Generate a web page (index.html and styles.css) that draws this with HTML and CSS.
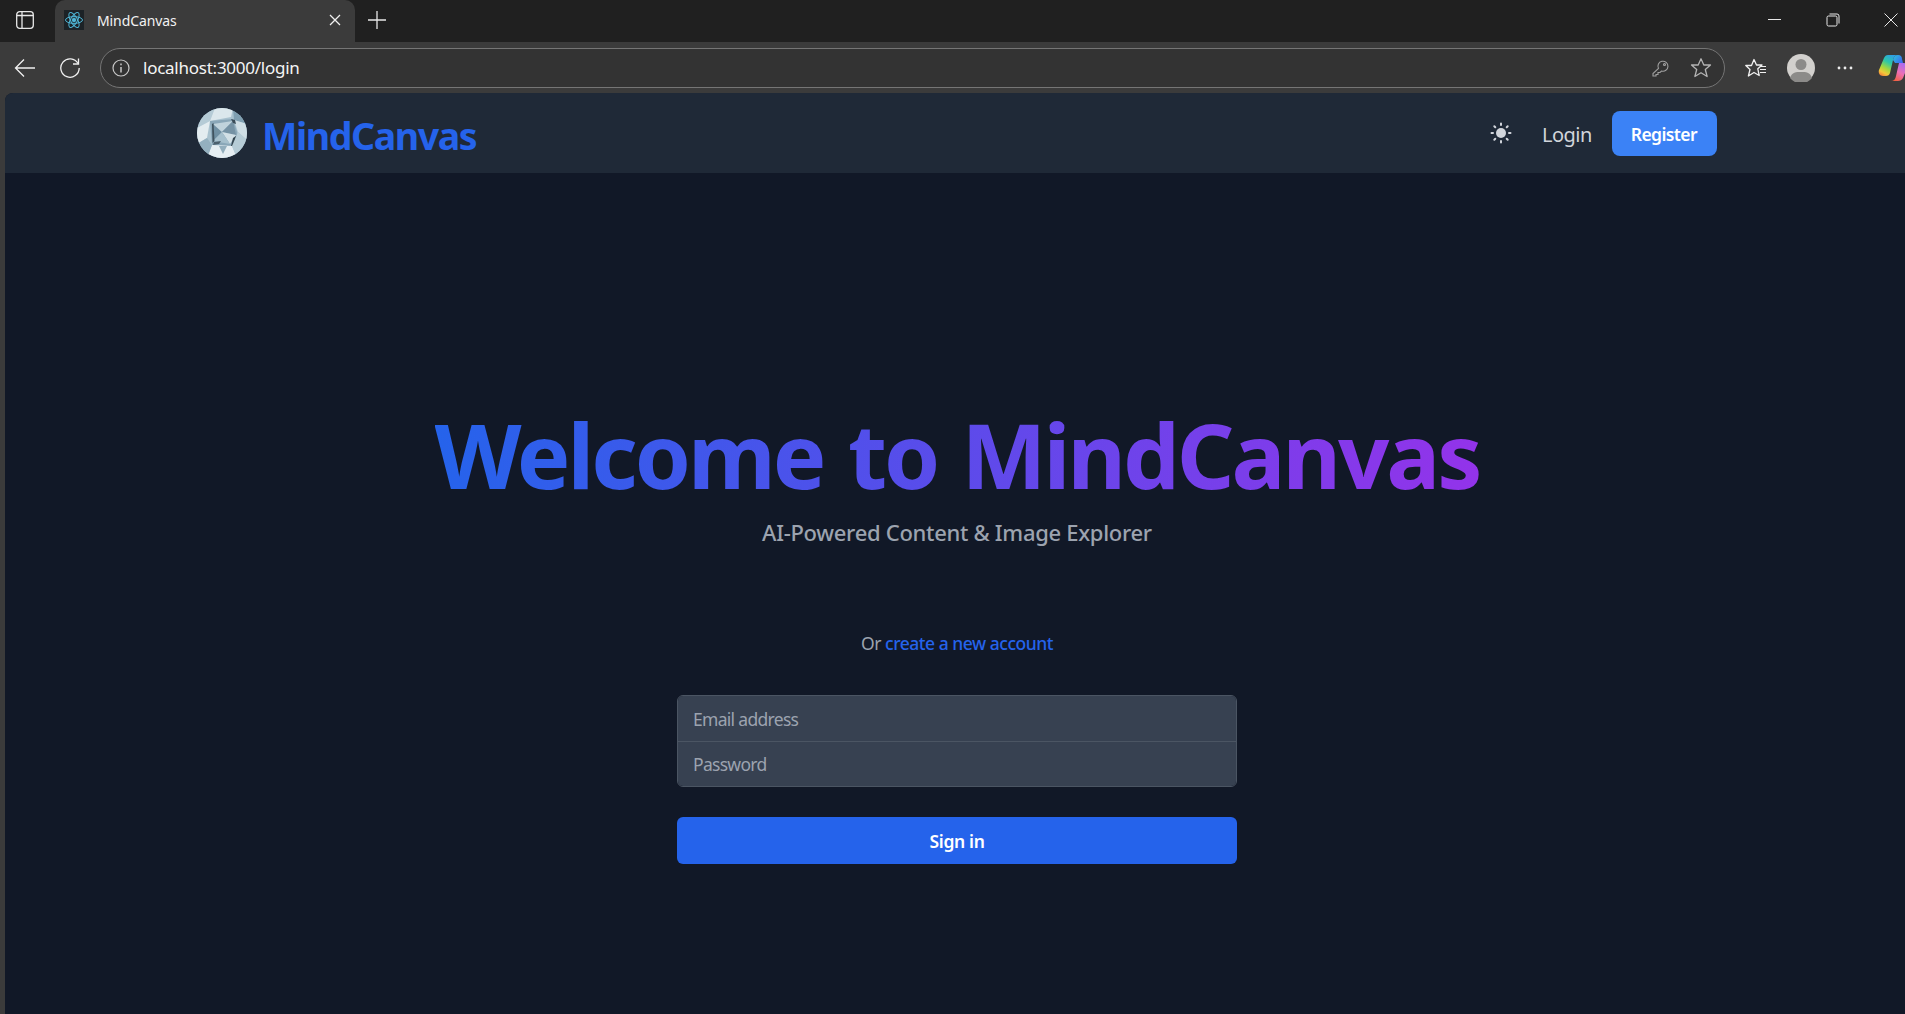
FILE: index.html
```html
<!DOCTYPE html>
<html>

	<head>
		<meta charset="UTF-8">
		<title>MindCanvas</title>
		<link rel="stylesheet" href="styles.css">
	</head>

	<body>
		<div class="tabstrip">
			<div class="panebtn">
				<svg width="18" height="18" viewBox="0 0 18 18" fill="none" stroke="#e8e8e8" stroke-width="1.3"><rect x="0.7" y="0.7" width="16.600" height="16.600" rx="3"/><path d="M6 1V17M1 4.500H17"/></svg>
			</div>
			<div class="tab">
				<span class="favicon">
					<svg width="20" height="20" viewBox="0 0 20 20" fill="none" stroke="#4fb6d6" stroke-width="1"><circle cx="10" cy="10" r="1.8" fill="#4fb6d6"/><ellipse cx="10" cy="10" rx="8.5" ry="3.4"/><ellipse cx="10" cy="10" rx="8.5" ry="3.4" transform="rotate(60 10 10)"/><ellipse cx="10" cy="10" rx="8.5" ry="3.4" transform="rotate(120 10 10)"/></svg>
				</span>
				<span class="tabtitle">MindCanvas</span>
				<svg class="tabclose" width="12" height="12" viewBox="0 0 12 12" stroke="#f0f0f0" stroke-width="1.3"><path d="M1 1L11 11M11 1L1 11"/></svg>
			</div>
			<svg class="newtab" width="18" height="18" viewBox="0 0 18 18" stroke="#e8e8e8" stroke-width="1.3"><path d="M9 0V18M0 9H18"/></svg>
			<div class="winbtns">
				<svg width="14" height="14" viewBox="0 0 14 14" stroke="#e8e8e8" stroke-width="1"><path d="M0 6.500H13"/></svg>
				<svg width="14" height="14" viewBox="0 0 14 14" fill="none" stroke="#e8e8e8" stroke-width="1"><rect x="1" y="3" width="10" height="10" rx="1.5"/><path d="M3.500 1H11a2 2 0 0 1 2 2v7.500"/></svg>
				<svg width="14" height="14" viewBox="0 0 14 14" stroke="#e8e8e8" stroke-width="1"><path d="M0.500 0.500L13.500 13.500M13.500 0.500L0.500 13.500"/></svg>
			</div>
		</div>
		<div class="toolbar">
			<svg class="backbtn" width="22" height="20" viewBox="0 0 22 20" fill="none" stroke="#f0f0f0" stroke-width="1.3"><path d="M21 10H2M10 1.500L1.500 10L10 18.500"/></svg>
			<svg class="reload" width="22" height="22" viewBox="0 0 22 22" fill="none" stroke="#f0f0f0" stroke-width="1.3"><path d="M19 6.500A9.200 9.200 0 1 0 20.200 11"/><path d="M19.500 1.500V7H14"/></svg>
			<div class="addressbar">
				<svg width="18" height="18" viewBox="0 0 18 18" fill="none" stroke="#c8c8c8" stroke-width="1.2"><circle cx="9" cy="9" r="8"/><path d="M9 8V13.500M9 4.600V6.200" stroke-width="1.5"/></svg>
				<span class="url">localhost:3000/login</span>
				<svg class="key" width="18" height="18" viewBox="0 0 18 18" fill="none" stroke="#a0a0a0" stroke-width="1.1"><path d="M6.500 9.500A5 5 0 1 1 9.500 12L8 13.500H6V15.500H4V17H1V14.500Z"/><circle cx="12.500" cy="5.500" r="1"/></svg>
				<svg class="star" width="22" height="22" viewBox="0 0 22 22" fill="none" stroke="#b4b4b4" stroke-width="1.3"><path d="M11 1.800L13.800 8H20.500L15.300 12.500L17.100 19.500L11 15.800L4.900 19.500L6.700 12.500L1.500 8H8.200Z" stroke-linejoin="round"/></svg>
			</div>
			<svg class="favs" width="22" height="20" viewBox="0 0 22 20" fill="none" stroke="#f0f0f0" stroke-width="1.3"><path d="M9 1.500L11.500 7H17L12.800 10.800L14.200 17.500L9 14.500L3.400 18L5 11.500L0.800 7.500H6.500Z" stroke-linejoin="round"/><path d="M15 8.500H21M15 11.500H21M15 14.500H21" stroke-width="1"/></svg>
			<svg class="avatar" width="28" height="28" viewBox="0 0 28 28"><circle cx="14" cy="14" r="14" fill="#d2d0cd"/><circle cx="14" cy="10.500" r="5.500" fill="#8c8b89"/><path d="M3 24C5 18 9 18 14 18C19 18 23 18 25 24A14 14 0 0 1 3 24Z" fill="#8c8b89"/></svg>
			<svg class="dots" width="16" height="4" viewBox="0 0 16 4" fill="#ececec"><circle cx="2" cy="2" r="1.400"/><circle cx="8" cy="2" r="1.400"/><circle cx="14" cy="2" r="1.400"/></svg>
			<svg class="copilot" width="30" height="28" viewBox="0 0 30 28">
				<defs>
					<linearGradient id="cop1" x1="0.7" y1="0" x2="0.2" y2="1"><stop offset="0" stop-color="#2f9fe8"/><stop offset=".35" stop-color="#2cc7a8"/><stop offset=".65" stop-color="#a6d83c"/><stop offset=".85" stop-color="#f4c83a"/><stop offset="1" stop-color="#f4873a"/></linearGradient>
					<linearGradient id="cop2" x1="0.7" y1="0" x2="0.2" y2="1"><stop offset="0" stop-color="#a76cf2"/><stop offset=".5" stop-color="#ee6fb4"/><stop offset="1" stop-color="#f2603c"/></linearGradient>
					<linearGradient id="cop3" x1="0" y1="0" x2="1" y2="0.6"><stop offset="0" stop-color="#2ec4dc"/><stop offset="1" stop-color="#3a6ef0"/></linearGradient>
				</defs>
				<path d="M10 1H20C17 1 15.500 3 15 6L12 19C11.500 21 10 22 8 22H5C2 22 0 19 1 16L6 4C7 2 8 1 10 1Z" fill="url(#cop1)"/>
				<path d="M20 1C23 1 24 3 24 5L25 9H17L15 6C15.500 3 17 1 20 1Z" fill="url(#cop3)"/>
				<path d="M18 9H25C28 9 30 11 29 14L25 24C24 26 22 27 20 27H13C16 27 17.500 25 18 22L21 9Z" fill="url(#cop2)"/>
			</svg>
		</div>
		<div class="viewport">
			<nav class="navbar">
				<div class="navinner">
					<a class="brand">
						<svg class="logo" width="50" height="50" viewBox="0 0 50 50">
							<defs><clipPath id="logoclip"><circle cx="25" cy="25" r="25"/></clipPath></defs>
							<g clip-path="url(#logoclip)">
								<rect width="50" height="50" fill="#a9c2cf"/>
								<polygon points="0,0 18,0 13,13 0,20" fill="#b5cbd6"/>
								<polygon points="18,0 36,0 34,9 13,13" fill="#dbe7ec"/>
								<polygon points="36,0 50,0 50,16 37,12" fill="#7f9fb1"/>
								<polygon points="0,20 13,13 10,30 0,36" fill="#e3ecf0"/>
								<polygon points="37,12 50,16 50,32 41,24" fill="#cfdee5"/>
								<polygon points="13,13 36,11 41,27 35,38 15,37" fill="#8aa7b8"/>
								<polygon points="16,16 25,24 16,33" fill="#6f8fa2"/>
								<polygon points="16,16 36,13 25,24" fill="#c0d3dc"/>
								<polygon points="36,13 39,27 25,24" fill="#7592a4"/>
								<polygon points="25,24 39,27 33,36" fill="#d2e0e6"/>
								<polygon points="25,24 33,36 16,33" fill="#a5bfcc"/>
								<polygon points="15,16 16.500,15 17.500,33 15.500,35" fill="#3f525e"/>
								<polygon points="17,34 24,33 22,36 16,37" fill="#4c606d"/>
								<polygon points="34,11 38,12 39,16 36,15" fill="#3a4c58"/>
								<polygon points="36,30 39,28 37,38 34,38" fill="#33454f"/>
								<polygon points="15,37 35,38 40,50 10,50" fill="#e6eef2"/>
								<polygon points="22,38 30,38 26,46" fill="#93aebd"/>
								<polygon points="0,36 10,30 15,37 10,50 0,50" fill="#94b0bf"/>
								<polygon points="41,24 50,32 50,50 40,50 35,38" fill="#b6ccd6"/>
							</g>
						</svg>
						<span class="brandname">MindCanvas</span>
					</a>
					<div class="navlinks">
						<svg class="sun" width="22" height="22" viewBox="0 0 22 22" fill="#d1d5db"><circle cx="11" cy="11" r="5"/><g stroke="#d1d5db" stroke-width="2" stroke-linecap="round"><path d="M11 1.500V3M11 19V20.500M1.500 11H3M19 11H20.500M4.300 4.300L5.300 5.300M16.700 16.700L17.700 17.700M4.300 17.700L5.300 16.700M16.700 5.300L17.700 4.300"/></g></svg>
						<a class="loginlink">Login</a>
						<a class="registerbtn">Register</a>
					</div>
				</div>
			</nav>
			<main class="content">
				<h1 class="hero">Welcome to MindCanvas</h1>
				<p class="tagline">AI-Powered Content &amp; Image Explorer</p>
				<p class="orline">Or <a class="createlink">create a new account</a></p>
				<form class="loginform">
					<div class="fields">
						<input class="field" type="email" placeholder="Email address">
						<input class="field" type="password" placeholder="Password">
					</div>
					<button class="signin" type="button">Sign in</button>
				</form>
			</main>
		</div>
	</body>

</html>
```
FILE: styles.css
```css
* {
	box-sizing: border-box;
}
html, body {
	margin: 0;
	padding: 0;
}
body {
	width: 1905px;
	height: 1014px;
	overflow: hidden;
	background: #3b3b3b;
	font-family: "Noto Sans", "Open Sans", sans-serif;
}

/* browser frame */
.tabstrip {
	display: flex;
	align-items: center;
	height: 42px;
	padding-bottom: 2px;
	background: #202020;
}
.panebtn {
	display: flex;
	justify-content: center;
	width: 50px;
}
.tab {
	display: flex;
	align-items: center;
	align-self: flex-end;
	width: 300px;
	height: 42px;
	margin: 0 0 -2px 5px;
	padding: 0 14px 2px 9px;
	background: #3b3b3b;
	border-radius: 10px 10px 0 0;
}
.favicon {
	display: flex;
	align-items: center;
	justify-content: center;
	width: 20px;
	height: 20px;
	background: #1c2226;
}
.tabtitle {
	flex: 1;
	margin-left: 13px;
	font-size: 14px;
	letter-spacing: -0.1px;
	color: #f2f2f2;
}
.newtab {
	margin-left: 13px;
}
.winbtns {
	display: flex;
	align-items: center;
	gap: 44px;
	margin-left: auto;
	padding-right: 7px;
}

.toolbar {
	display: flex;
	align-items: center;
	height: 51px;
	padding-top: 1px;
	background: #3b3b3b;
}
.backbtn {
	flex: none;
	margin-left: 14px;
}
.reload {
	flex: none;
	margin-left: 23px;
}
.addressbar {
	display: flex;
	flex: none;
	align-items: center;
	width: 1625px;
	height: 40px;
	margin-left: 19px;
	padding: 0 12px 0 11px;
	background: #333333;
	border: 1px solid #757575;
	border-radius: 20px;
}
.url {
	flex: 1;
	margin-left: 13px;
	padding-bottom: 2px;
	font-size: 17px;
	letter-spacing: -0.25px;
	color: #f5f5f5;
}
.key {
	margin-right: 20px;
}
.favs {
	flex: none;
	margin-left: 20px;
}
.avatar {
	flex: none;
	margin-left: 20px;
}
.dots {
	flex: none;
	margin-left: 22px;
}
.copilot {
	flex: none;
	margin-left: 25px;
}

/* page */
.viewport {
	width: 1904px;
	height: 921px;
	margin-left: 5px;
	overflow: hidden;
	background: #111827;
	border-radius: 8px 0 0 0;
}
.navbar {
	height: 80px;
	background: #1f2937;
}
.navinner {
	display: flex;
	align-items: center;
	justify-content: space-between;
	width: 1520px;
	height: 80px;
	margin: 0 auto;
}
.brand {
	display: flex;
	align-items: center;
	gap: 15px;
}
.brandname {
	padding-top: 4px;
	font-size: 37.5px;
	font-weight: 700;
	letter-spacing: -1.4px;
	color: #2563eb;
}
.navlinks {
	display: flex;
	align-items: center;
}
.loginlink {
	margin-left: 30px;
	padding-top: 2px;
	font-size: 20px;
	letter-spacing: -0.5px;
	color: #d1d5db;
}
.registerbtn {
	margin-left: 20px;
	padding: 11px 20px 9px 19px;
	background: #3b82f6;
	border-radius: 8px;
	font-size: 17.5px;
	font-weight: 600;
	letter-spacing: -0.6px;
	color: #fff;
	line-height: 25px;
}

.content {
	display: flex;
	flex-direction: column;
	align-items: center;
	padding-top: 236px;
}
.hero {
	margin: 0;
	font-size: 90px;
	font-weight: 700;
	letter-spacing: -3px;
	word-spacing: 4px;
	line-height: 90px;
	background: linear-gradient(90deg, #2563eb, #9333ea);
	-webkit-background-clip: text;
	background-clip: text;
	color: transparent;
}
.tagline {
	margin: 18px 0 0;
	font-size: 22px;
	font-weight: 500;
	letter-spacing: -0.3px;
	line-height: 30px;
	color: #9ca3af;
}
.orline {
	margin: 84px 0 0;
	font-size: 17.5px;
	letter-spacing: -0.48px;
	line-height: 25px;
	color: #9ca3af;
}
.createlink {
	font-weight: 500;
	color: #2563eb;
}
.loginform {
	width: 560px;
	margin-top: 39px;
}
.fields {
	display: flex;
	flex-direction: column;
	overflow: hidden;
	border: 1px solid #4b5563;
	border-radius: 6px;
}
.field {
	display: block;
	width: 100%;
	height: 45px;
	padding: 0 15px;
	background: #374151;
	border: 0;
	outline: 0;
	font-family: inherit;
	font-size: 17.5px;
	letter-spacing: -0.7px;
	color: #fff;
}
.field + .field {
	border-top: 1px solid #4b5563;
}
.field::placeholder {
	color: #9ca3af;
}
.signin {
	display: block;
	width: 100%;
	height: 47px;
	margin-top: 30px;
	background: #2563eb;
	border: 0;
	border-radius: 6px;
	font-family: inherit;
	font-size: 17.5px;
	font-weight: 600;
	letter-spacing: -0.35px;
	color: #fff;
}
```
